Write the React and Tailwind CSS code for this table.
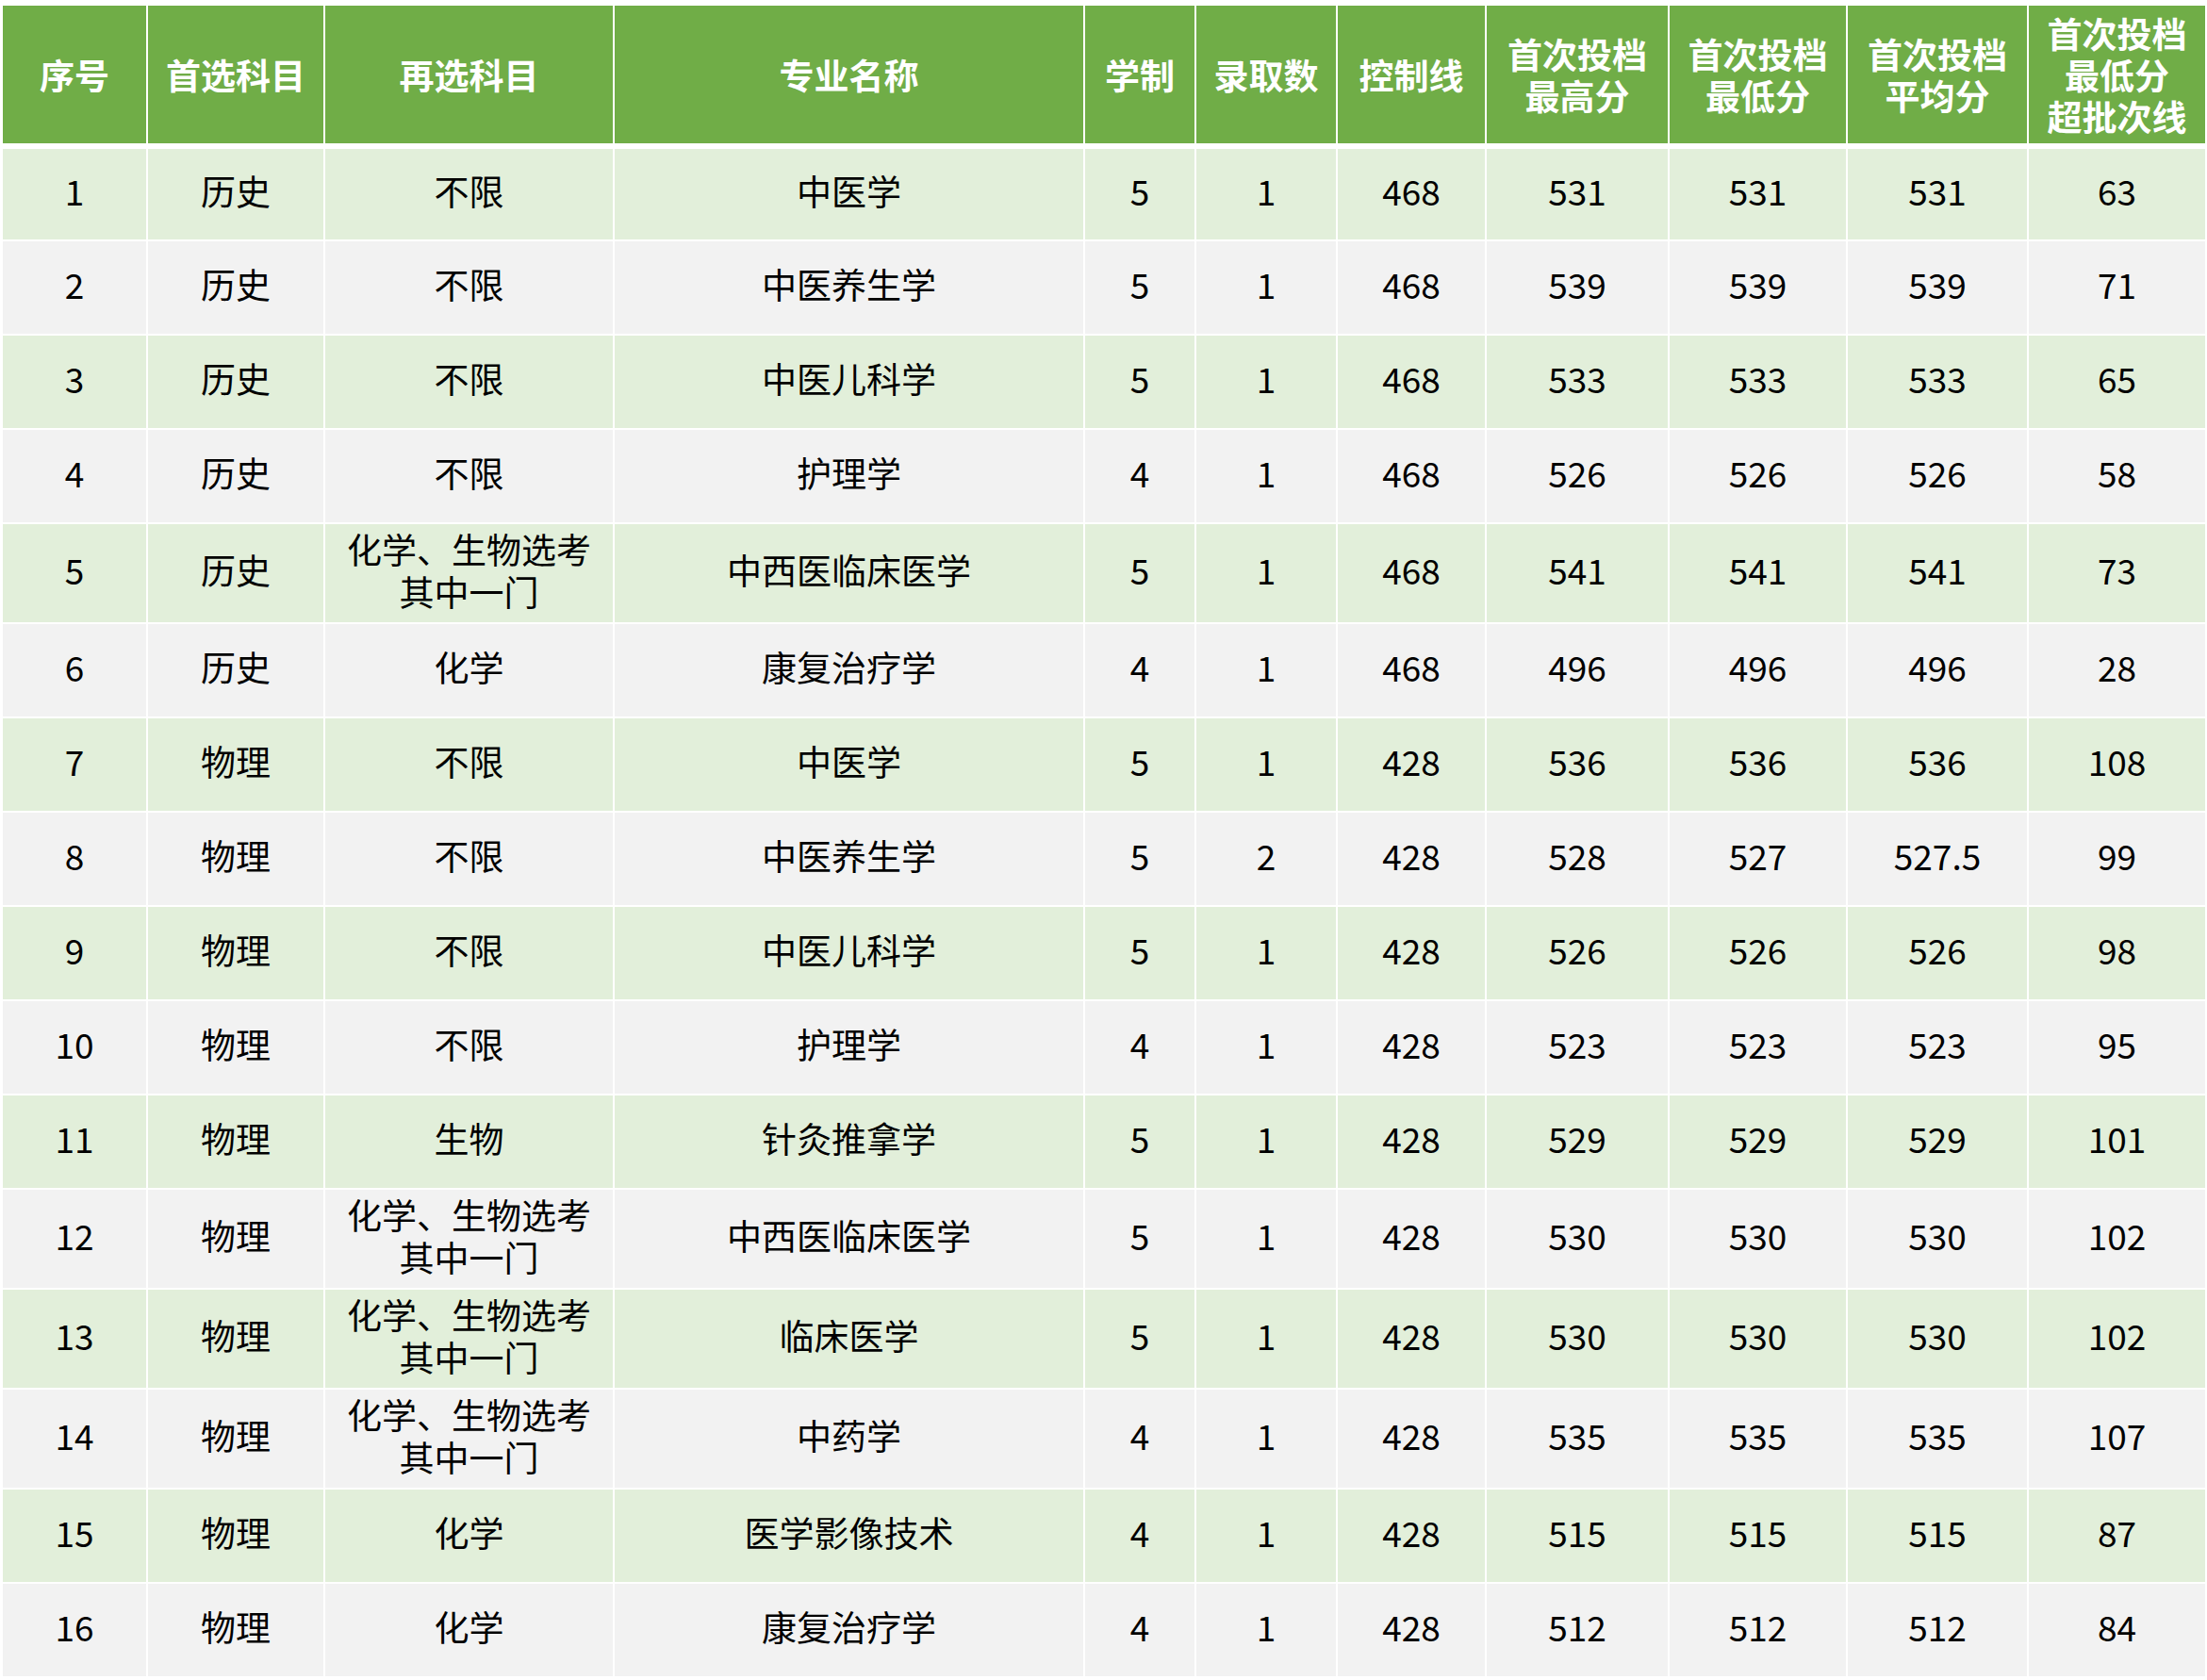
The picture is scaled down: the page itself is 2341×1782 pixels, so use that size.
import React from 'react';

// ─── Column layout (px widths measured from the sheet) ───────────────────────
const GRID =
  'grid grid-cols-[152px_186px_305px_497px_116px_148px_156px_192px_187px_190px_187px] gap-x-[2px]';

const HEADERS = [
  ['序号'],
  ['首选科目'],
  ['再选科目'],
  ['专业名称'],
  ['学制'],
  ['录取数'],
  ['控制线'],
  ['首次投档', '最高分'],
  ['首次投档', '最低分'],
  ['首次投档', '平均分'],
  ['首次投档', '最低分', '超批次线'],
];

const TWO = ['化学、生物选考', '其中一门'];

const ROWS = [
  [1, '历史', ['不限'], '中医学', 5, 1, 468, 531, 531, 531, 63],
  [2, '历史', ['不限'], '中医养生学', 5, 1, 468, 539, 539, 539, 71],
  [3, '历史', ['不限'], '中医儿科学', 5, 1, 468, 533, 533, 533, 65],
  [4, '历史', ['不限'], '护理学', 4, 1, 468, 526, 526, 526, 58],
  [5, '历史', TWO, '中西医临床医学', 5, 1, 468, 541, 541, 541, 73],
  [6, '历史', ['化学'], '康复治疗学', 4, 1, 468, 496, 496, 496, 28],
  [7, '物理', ['不限'], '中医学', 5, 1, 428, 536, 536, 536, 108],
  [8, '物理', ['不限'], '中医养生学', 5, 2, 428, 528, 527, '527.5', 99],
  [9, '物理', ['不限'], '中医儿科学', 5, 1, 428, 526, 526, 526, 98],
  [10, '物理', ['不限'], '护理学', 4, 1, 428, 523, 523, 523, 95],
  [11, '物理', ['生物'], '针灸推拿学', 5, 1, 428, 529, 529, 529, 101],
  [12, '物理', TWO, '中西医临床医学', 5, 1, 428, 530, 530, 530, 102],
  [13, '物理', TWO, '临床医学', 5, 1, 428, 530, 530, 530, 102],
  [14, '物理', TWO, '中药学', 4, 1, 428, 535, 535, 535, 107],
  [15, '物理', ['化学'], '医学影像技术', 4, 1, 428, 515, 515, 515, 87],
  [16, '物理', ['化学'], '康复治疗学', 4, 1, 428, 512, 512, 512, 84],
];

// multi-line cell text: one text block, broken with <br />
function Lines({ lines }) {
  return (
    <p>
      {lines.map((l, i) => (
        <React.Fragment key={l}>
          {i > 0 && <br />}
          {l}
        </React.Fragment>
      ))}
    </p>
  );
}

function Cell({ children, className }) {
  return (
    <div className={`flex items-center justify-center text-center ${className}`}>
      {children}
    </div>
  );
}

export default function App() {
  return (
    <div
      className="min-h-[1782px] w-[2341px] bg-white pl-[3px] pt-[6px]"
      style={{ fontFamily: '"Noto Sans CJK SC", "Noto Sans", sans-serif' }}
    >
      {/* header */}
      <div className={`${GRID} h-[146px]`}>
        {HEADERS.map((lines, i) => (
          <Cell key={i} className="bg-[#70AD47] text-[37px] font-bold leading-[44px] text-white">
            <Lines lines={lines} />
          </Cell>
        ))}
      </div>

      {/* body */}
      <div className="mt-[6px] flex flex-col gap-y-[2px]">
        {ROWS.map((r, idx) => {
          const bg = idx % 2 === 0 ? 'bg-[#E2EFDA]' : 'bg-[#F2F2F2]';
          const tall = r[2].length > 1;
          const h = idx === 0 ? 'h-[96px]' : tall ? 'h-[104px]' : 'h-[98px]';
          return (
            <div key={r[0]} className={`${GRID} ${h}`}>
              {r.map((v, j) => (
                <Cell key={j} className={`${bg} pb-[7px] text-[37px] leading-[45px] text-black`}>
                  {Array.isArray(v) ? <Lines lines={v} /> : v}
                </Cell>
              ))}
            </div>
          );
        })}
      </div>
    </div>
  );
}
